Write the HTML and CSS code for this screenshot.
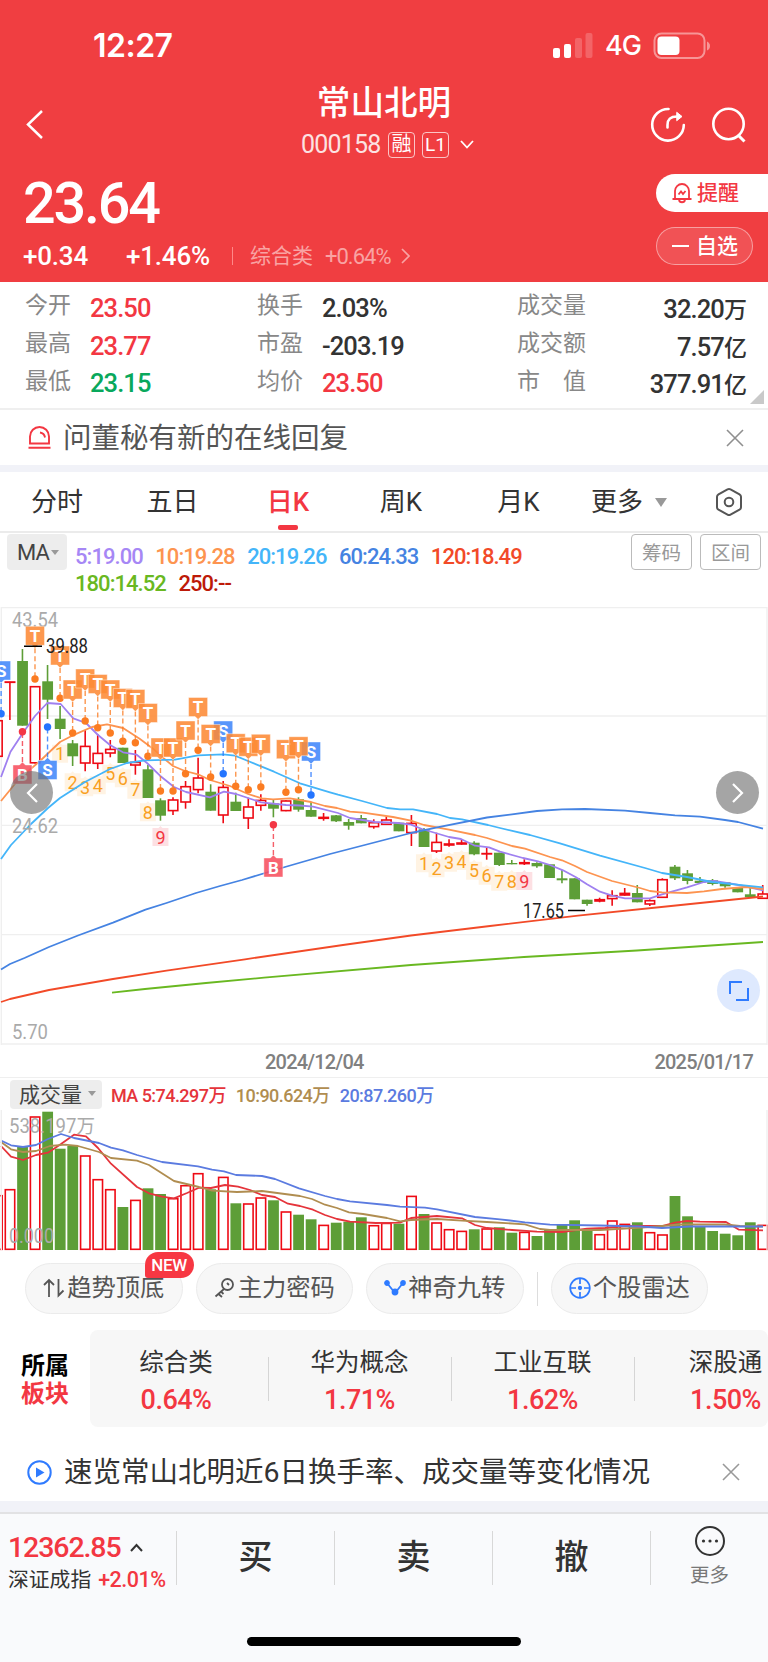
FILE: index.html
```html
<!DOCTYPE html>
<html lang="zh-CN">
<head>
    <meta charset="UTF-8">
    <meta name="viewport" content="width=device-width, initial-scale=1.0">
    <title>常山北明 000158</title>
    <link rel="stylesheet" href="styles.css">
</head>
<body>
    <header class="header">
        <div class="status-bar">
            <span class="clock">12:27</span>
            <svg class="signal" width="40" height="26" viewBox="0 0 40 26" fill="#fff">
                <rect x="0" y="15" width="7" height="10" rx="2"/>
                <rect x="11" y="11" width="7" height="14" rx="2"/>
                <rect x="22" y="5" width="7" height="20" rx="2" opacity=".2"/>
                <rect x="32.500" y="0" width="7" height="25" rx="2" opacity=".2"/>
            </svg>
            <span class="network">4G</span>
            <svg width="58" height="28" viewBox="0 0 58 28">
                <rect x="1.500" y="1.500" width="50" height="24.500" rx="7" fill="none" stroke="#fff" stroke-opacity=".45" stroke-width="2"/>
                <rect x="4.500" y="4.500" width="22" height="18.500" rx="4" fill="#fff"/>
                <path d="M54 9.500q3 1.500 3 4.500t-3 4.500z" fill="#fff" fill-opacity=".45"/>
            </svg>
        </div>

        <div class="nav">
            <svg class="back" width="20" height="30" viewBox="0 0 20 30" fill="none" stroke="#fff" stroke-width="2.500"><path d="M17 2 3 15.500 17 29"/></svg>
            <div class="stock">
                <h1>常山北明</h1>
                <div class="stock-code">
                    <span class="num">000158</span>
                    <span class="tag">融</span>
                    <span class="tag tag-level">L1</span>
                    <svg width="14" height="9" viewBox="0 0 14 9" fill="none" stroke="#fff" stroke-width="1.800"><path d="M1 1l6 6.500L13 1"/></svg>
                </div>
            </div>
            <div class="nav-actions">
                <svg width="36" height="36" viewBox="0 0 36 36" fill="none" stroke="#fff" stroke-width="2.600" stroke-linecap="round">
                    <path d="M18.500 2A15.800 15.800 0 1 0 33.800 18"/>
                    <path d="M17.500 20.500v-2.500c0-6 3-8.500 9.500-8.500"/>
                    <path d="M27 5.500l5 4-5 4z" fill="#fff" stroke-width="1" stroke-linejoin="round"/>
                </svg>
                <svg width="36" height="36" viewBox="0 0 36 36" fill="none" stroke="#fff" stroke-width="2.600">
                    <circle cx="17.500" cy="17" r="15.200"/>
                    <path d="M27 28l6.500 6.500" stroke-width="3"/>
                </svg>
            </div>
        </div>

        <div class="quote">
            <div class="quote-main">
                <div class="price num">23.64</div>
                <div class="change">
                    <span class="num diff">+0.34</span>
                    <span class="num percent">+1.46%</span>
                    <i class="bar"></i>
                    <span class="sector-name">综合类</span>
                    <span class="num sector-change">+0.64%</span>
                    <svg width="9" height="16" viewBox="0 0 9 16" fill="none" stroke="#f9a3a3" stroke-width="1.700"><path d="M1 1l7 7-7 7"/></svg>
                </div>
            </div>
            <div class="quote-actions">
                <div class="pill pill-alert">
                    <svg width="22" height="22" viewBox="0 0 22 22" fill="none" stroke="#f33742" stroke-width="1.800">
                        <path d="M4 17V9a7 7 0 0 1 14 0v8M1.500 17h19M8 18c.5 3 5.500 3 6 0M7.500 12.500l2.500-3 2 2.500 2.500-3"/>
                    </svg>
                    提醒
                </div>
                <div class="pill pill-fav"><i class="minus"></i>自选</div>
            </div>
        </div>
    </header>

    <section class="stats">
        <div class="stat"><label>今开</label><b class="num up">23.50</b></div>
        <div class="stat"><label>换手</label><b class="num">2.03%</b></div>
        <div class="stat stat-right"><label>成交量</label><b class="num">32.20<em>万</em></b></div>
        <div class="stat"><label>最高</label><b class="num up">23.77</b></div>
        <div class="stat"><label>市盈</label><b class="num">-203.19</b></div>
        <div class="stat stat-right"><label>成交额</label><b class="num">7.57<em>亿</em></b></div>
        <div class="stat"><label>最低</label><b class="num down">23.15</b></div>
        <div class="stat"><label>均价</label><b class="num up">23.50</b></div>
        <div class="stat stat-right"><label>市　值</label><b class="num">377.91<em>亿</em></b></div>
        <i class="corner"></i>
    </section>

    <div class="notice">
        <svg width="23" height="23" viewBox="0 0 23 23" fill="none" stroke="#f33742" stroke-width="1.900">
            <path d="M2 17.500V10.500a9.500 9.500 0 0 1 19 0v7zM.500 21.800h22M12 6.500c3 .5 4.500 2 5 5"/>
        </svg>
        <p>问董秘有新的在线回复</p>
        <svg class="close" width="18" height="18" viewBox="0 0 18 18" stroke="#8f8f8f" stroke-width="1.600"><path d="M1 1l16 16M17 1L1 17"/></svg>
    </div>

    <nav class="tabs">
        <span class="tab">分时</span>
        <span class="tab">五日</span>
        <span class="tab active">日K</span>
        <span class="tab">周K</span>
        <span class="tab">月K</span>
        <span class="tab tab-more">更多<i class="arrow"></i></span>
        <svg class="tab-set" width="28" height="30" viewBox="0 0 28 30" fill="none" stroke="#555" stroke-width="2">
            <path d="M12.500 2.300q1.500-.8 3 0l9 5q1.500.9 1.500 2.500v10.400q0 1.600-1.500 2.500l-9 5q-1.500.8-3 0l-9-5Q2 21.800 2 20.200V9.800q0-1.600 1.500-2.500z"/>
            <circle cx="14" cy="15" r="4.300"/>
        </svg>
    </nav>

    <section class="ma-bar">
        <span class="select select-ma">MA<i class="arrow arrow-small"></i></span>
        <div class="legend num">
            <span class="ma5">5:19.00</span>
            <span class="ma10">10:19.28</span>
            <span class="ma20">20:19.26</span>
            <span class="ma60">60:24.33</span>
            <span class="ma120">120:18.49</span>
            <span class="ma180">180:14.52</span>
            <span class="ma250">250:--</span>
        </div>
        <button>筹码</button>
        <button>区间</button>
    </section>

    <section class="kline">
        <svg id="kline" width="768" height="438" viewBox="0 607 768 438"></svg>
        <span class="round round-left"><svg width="12" height="20" viewBox="0 0 12 20"><path d="M11 1L2 10l9 9"/></svg></span>
        <span class="round round-right"><svg width="12" height="20" viewBox="0 0 12 20"><path d="M1 1l9 9-9 9"/></svg></span>
        <span class="full"><svg width="20" height="20" viewBox="0 0 20 20" fill="none" stroke="#2f7bff" stroke-width="2"><path d="M1 13V1h12M19 7v12H7"/></svg></span>
    </section>
    <div class="dates num"><span>2024/12/04</span><span>2025/01/17</span></div>

    <section class="volume">
        <div class="volume-bar">
            <span class="select select-vol">成交量<i class="arrow arrow-small"></i></span>
            <div class="legend-vol num">
                <span class="vol5">MA 5:74.297万</span>
                <span class="vol10">10:90.624万</span>
                <span class="vol20">20:87.260万</span>
            </div>
        </div>
        <svg id="volume" width="768" height="141" viewBox="0 1110 768 141"></svg>
    </section>

    <section class="chips">
        <div class="chip">
            <svg width="22" height="20" viewBox="0 0 22 20" fill="none" stroke="#555" stroke-width="1.800"><path d="M1 7l5-5 5 5M6 2v17M15.500 1v16.500l5-5"/></svg>
            趋势顶底
            <span class="new">NEW</span>
        </div>
        <div class="chip">
            <svg width="22" height="20" viewBox="0 0 22 20" fill="none" stroke="#555" stroke-width="1.800"><circle cx="13.500" cy="6.500" r="5.500"/><path d="M10 11l-8.500 7.500M4.500 16l3.500 3M7 13.500l2.500 2.500M13 5l2 2"/></svg>
            主力密码
        </div>
        <div class="chip">
            <svg width="22" height="20" viewBox="0 0 22 20" fill="#2f7bff" stroke="#2f7bff" stroke-width="1.800"><path d="M3 5l8 10 8-10" fill="none"/><circle cx="3" cy="5" r="2"/><circle cx="11" cy="14" r="2.500"/><circle cx="19" cy="5" r="2"/></svg>
            神奇九转
        </div>
        <i class="chip-line"></i>
        <div class="chip">
            <svg width="22" height="22" viewBox="0 0 22 22" fill="none" stroke="#2f7bff" stroke-width="1.700"><circle cx="11" cy="11" r="9.800"/><path d="M11 1v6M11 15v6M1 11h6M15 11h6"/><circle cx="11" cy="11" r="1.300" fill="#2f7bff"/></svg>
            个股雷达
        </div>
    </section>

    <section class="sectors">
        <div class="sectors-title">所属<br><span>板块</span></div>
        <div class="sectors-list">
            <div class="sector"><span>综合类</span><b class="num">0.64%</b></div>
            <div class="sector"><span>华为概念</span><b class="num">1.71%</b></div>
            <div class="sector"><span>工业互联</span><b class="num">1.62%</b></div>
            <div class="sector"><span>深股通</span><b class="num">1.50%</b></div>
        </div>
    </section>

    <div class="notice notice-video">
        <svg width="25" height="25" viewBox="0 0 25 25"><circle cx="12.500" cy="12.500" r="11.200" fill="none" stroke="#2f7bff" stroke-width="2"/><path d="M9 7.500l8.500 5-8.500 5z" fill="#2f7bff"/></svg>
        <p>速览常山北明近6日换手率、成交量等变化情况</p>
        <svg class="close" width="18" height="18" viewBox="0 0 18 18" stroke="#999" stroke-width="1.600"><path d="M1 1l16 16M17 1L1 17"/></svg>
    </div>

    <footer class="footer">
        <div class="trade">
            <div class="index">
                <div class="index-value num">12362.85<svg width="13" height="9" viewBox="0 0 13 9" fill="none" stroke="#333" stroke-width="2"><path d="M1 8l5.500-6L12 8"/></svg></div>
                <div class="index-name">深证成指<span class="num">+2.01%</span></div>
            </div>
            <div class="action">买</div>
            <div class="action">卖</div>
            <div class="action">撤</div>
            <div class="more">
                <svg width="32" height="32" viewBox="0 0 32 32"><circle cx="16" cy="16" r="14" fill="none" stroke="#333" stroke-width="2"/><g fill="#333"><circle cx="9.500" cy="16" r="1.600"/><circle cx="16" cy="16" r="1.600"/><circle cx="22.500" cy="16" r="1.600"/></g></svg>
                更多
            </div>
        </div>
        <i class="home"></i>
    </footer>
    <script src="chart.js"></script>
</body>
</html>
```

FILE: styles.css
```css
* {
    box-sizing: border-box;
}

body {
    margin: 0;
    width: 768px;
    background: #fff;
    color: #333;
    font-family: Roboto, "Noto Sans CJK SC", sans-serif;
    overflow-x: hidden;
}

svg {
    display: block;
    flex: none;
}

i,
em {
    font-style: normal;
}

.num {
    font-family: Roboto, "Noto Sans CJK SC", sans-serif;
    font-weight: 500;
    letter-spacing: -0.045em;
}

.up {
    color: #f33742;
}

.down {
    color: #09a85c;
}

/* header */
.header {
    height: 282px;
    background: #f03e41;
    color: #fff;
}

.status-bar {
    display: flex;
    align-items: center;
    height: 92px;
    padding: 0 57px 0 93px;
}

.clock {
    font: 600 32px/40px Inter, sans-serif;
    letter-spacing: -0.5px;
}

.signal {
    margin-left: auto;
    margin-right: 12px;
}

.network {
    width: 48px;
    font: 500 27px/40px Inter, sans-serif;
    letter-spacing: -1px;
}

.nav {
    display: grid;
    grid-template-columns: 1fr 200px 1fr;
    height: 76px;
    margin-top: -8px;
}

.back {
    margin: 25px 0 0 25px;
}

.stock {
    text-align: center;
}

.stock h1 {
    margin: 0;
    padding-top: 1px;
    font-size: 33.6px;
    font-weight: 500;
    line-height: 38px;
}

.stock-code {
    display: flex;
    align-items: center;
    height: 43px;
    padding-left: 17px;
    font-size: 25px;
}

.stock-code .num {
    width: 87px;
    text-align: left;
    font-weight: 400;
    letter-spacing: -0.8px;
    opacity: .85;
}

.tag {
    width: 27px;
    height: 26px;
    margin-right: 7px;
    border: 1.5px solid rgba(255, 255, 255, .7);
    border-radius: 4px;
    font-size: 20px;
    line-height: 22px;
}

.tag-level {
    margin-right: 11px;
    font-size: 19px;
    line-height: 24px;
}

.nav-actions {
    display: flex;
    justify-content: flex-end;
    gap: 25px;
    padding: 23px 21px 0 0;
}

.quote {
    display: flex;
    justify-content: space-between;
    height: 122px;
}

.quote-main {
    padding-left: 23px;
}

.price {
    height: 75px;
    padding-top: 9px;
    font-size: 57.5px;
    line-height: 70px;
    letter-spacing: -2.2px;
}

.change {
    display: flex;
    align-items: center;
    height: 42px;
    font-size: 26px;
}

.diff,
.percent {
    letter-spacing: -0.2px;
}

.diff {
    width: 103px;
}

.percent {
    width: 106px;
}

.bar {
    width: 1px;
    height: 18px;
    margin-right: 17px;
    background: #f88;
}

.sector-name {
    width: 75px;
    color: #f9a3a3;
    font-size: 21px;
    line-height: 26px;
}

.sector-change {
    margin-right: 10px;
    color: #f9a3a3;
    font-size: 22px;
    font-weight: 400;
}

.quote-actions {
    width: 112px;
    padding-top: 14px;
}

.pill {
    display: flex;
    align-items: center;
    height: 38px;
    padding-left: 15px;
    font-size: 21px;
    font-weight: 500;
    line-height: 28px;
}

.pill-alert {
    gap: 4px;
    border-radius: 19px 0 0 19px;
    background: #fff;
    color: #f33742;
}

.pill-fav {
    width: 97px;
    margin-top: 15px;
    padding-bottom: 1px;
    border: 1.5px solid rgba(255, 255, 255, .45);
    border-radius: 19px;
    background: #f15255;
}

.minus {
    width: 17px;
    height: 2px;
    margin-right: 7px;
    background: #fff;
}

/* quote table */
.stats {
    position: relative;
    display: grid;
    grid-template-columns: 232px 260px 1fr;
    grid-auto-rows: 37.7px;
    height: 126px;
    padding: 7px 22px 0 25px;
}

.stat {
    display: flex;
    align-items: center;
}

.stat label {
    width: 65px;
    color: #888;
    font-size: 23px;
    line-height: 34px;
    padding-bottom: 3px;
}

.stat-right label {
    width: 80px;
}

.stat b {
    font-size: 25.5px;
    letter-spacing: -0.9px;
}

.stat em {
    font-size: 23px;
}

.stat-right {
    justify-content: space-between;
}

.corner {
    position: absolute;
    right: 4px;
    bottom: 4px;
    border-left: 14px solid transparent;
    border-bottom: 14px solid #c9c9c9;
}

.notice {
    display: flex;
    align-items: center;
    height: 57px;
    padding: 0 24px 0 28px;
    border-top: 2px solid #efefef;
}

.notice p {
    margin: 2px auto 0 12px;
    color: #555;
    font-size: 28.5px;
    line-height: 40px;
}

/* period tabs */
.tabs {
    display: flex;
    height: 68px;
    padding: 8px 25px 0 31px;
    border-top: 7px solid #f1f2f8;
    border-bottom: 2px solid #ebebeb;
    color: #333;
    font-size: 26px;
    line-height: 44px;
}

.tab {
    position: relative;
    width: 115.500px;
}

.tab:nth-child(3) {
    width: 114px;
    padding-left: 5px;
}

.tab:nth-child(4) {
    padding-left: 4px;
}

.tab:nth-child(5) {
    width: 100px;
    padding-left: 6px;
}

.tab-more {
    display: flex;
    align-items: center;
    width: 124px;
    height: 44px;
}

.tab.active {
    color: #f33742;
    font-weight: 500;
}

.active::after {
    content: "";
    position: absolute;
    left: 16px;
    bottom: 1px;
    width: 20px;
    height: 5px;
    border-radius: 2px;
    background: #f33742;
}

.tab-set {
    margin-top: 7px;
}

.arrow {
    margin-left: 12px;
    border: 6.5px solid transparent;
    border-top: 9px solid #999;
    border-bottom: 0;
}

.arrow-small {
    margin-left: 2px;
    border-width: 5px 4.5px 0;
}

/* moving averages */
.ma-bar {
    display: flex;
    height: 74px;
    padding: 1px 7px 0;
}

.select {
    display: flex;
    align-items: center;
    border-radius: 4px;
    background: #ededed;
    color: #444;
}

.select-ma {
    width: 60px;
    height: 36px;
    padding-left: 10px;
    font-size: 22px;
    letter-spacing: -1px;
}

.legend {
    display: flex;
    flex-wrap: wrap;
    align-content: flex-start;
    width: 556px;
    padding: 9px 40px 0 8px;
    column-gap: 12.5px;
    font-size: 22px;
    line-height: 27px;
    letter-spacing: -0.95px;
}

.ma5 { color: #a687f5; }
.ma10 { color: #fd9450; }
.ma20 { color: #44b5f9; }
.ma60 { color: #4583e2; }
.ma120 { color: #f24a28; }
.ma180 { color: #69b821; }
.ma250 { color: #bd1a08; }

.ma-bar button {
    flex: none;
    width: 61px;
    height: 36px;
    margin-left: 8px;
    padding: 0;
    border: 1.5px solid #bbb;
    border-radius: 4px;
    background: #fff;
    color: #999;
    font: 19.5px/32px "Noto Sans CJK SC", sans-serif;
}

.kline {
    position: relative;
    height: 438px;
}

.kline text,
.volume text {
    font-family: Roboto, "Noto Sans CJK SC", sans-serif;
    font-size: 19.5px;
}

.kline .mark {
    font-size: 17px;
    font-weight: 700;
}

.kline .count {
    font-size: 18px;
}

/* page buttons lie over the chart */
.round,
.full {
    position: absolute;
    display: flex;
    align-items: center;
    justify-content: center;
    width: 43px;
    height: 43px;
    border-radius: 50%;
}

.round {
    top: 164px;
    background: rgba(110, 110, 110, .62);
}

.round path {
    fill: none;
    stroke: #fff;
    stroke-width: 2.2;
}

.round-left {
    left: 10px;
}

.round-right {
    right: 9px;
}

.full {
    top: 362px;
    right: 8px;
    background: #dee9fe;
}

.dates {
    display: flex;
    justify-content: space-between;
    height: 33px;
    padding: 0 15px 0 265px;
    border-bottom: 1.5px solid #efefef;
    color: #808080;
    font-size: 20px;
    line-height: 34px;
    letter-spacing: -0.8px;
}

/* volume */
.volume {
    height: 173px;
}

.volume-bar {
    display: flex;
    height: 32px;
    padding: 2px 10px 0;
}

.select-vol {
    width: 92px;
    height: 29px;
    padding: 0 0 3px 9px;
    font-size: 21px;
}

.select-vol .arrow {
    margin-left: 6px;
}

.legend-vol {
    display: flex;
    gap: 10px;
    padding-left: 9px;
    font-size: 18px;
    line-height: 32px;
    letter-spacing: -0.55px;
}

.vol5 { color: #e5343b; }
.vol10 { color: #b08d50; }
.vol20 { color: #5b7be0; }

.chips {
    display: flex;
    align-items: center;
    gap: 13px;
    height: 79px;
    padding: 0 25px 4px;
}

.chip {
    position: relative;
    display: flex;
    flex: none;
    align-items: center;
    justify-content: center;
    gap: 2px;
    width: 157.5px;
    height: 51px;
    padding-bottom: 2px;
    border: 1.5px solid #ebebeb;
    border-radius: 26px;
    background: #f7f7f7;
    color: #555;
    font-size: 24.3px;
    line-height: 34px;
    white-space: nowrap;
}

.chip-line {
    width: 1px;
    height: 34px;
    background: #ddd;
}

.new {
    position: absolute;
    top: -12px;
    right: -12px;
    width: 49px;
    height: 26px;
    border-radius: 13px 13px 13px 3px;
    background: #f73742;
    color: #fff;
    font-size: 17px;
    font-weight: 500;
    line-height: 27px;
    text-align: center;
    letter-spacing: -0.3px;
}

/* sectors */
.sectors {
    display: flex;
    height: 97px;
}

.sectors-title {
    width: 90px;
    padding: 22px 0 0 21px;
    color: #000;
    font-size: 24px;
    font-weight: 700;
    line-height: 28px;
}

.sectors-title span {
    color: #f33742;
}

.sectors-list {
    display: flex;
    width: 678px;
    overflow: hidden;
    border-radius: 8px;
    background: #f7f7f7;
}

.sector {
    flex: none;
    position: relative;
    display: flex;
    flex-direction: column;
    align-items: center;
    width: 183px;
    padding-top: 15px;
    color: #333;
    font-size: 24.5px;
    line-height: 36px;
}

.sector:first-child {
    width: 178px;
    padding-right: 6px;
}

.sector + .sector::before {
    content: "";
    position: absolute;
    left: 0;
    top: 27px;
    width: 1px;
    height: 44px;
    background: #d5d5d5;
}

.sector b {
    color: #f33742;
    font-size: 27px;
    line-height: 38px;
    letter-spacing: -0.5px;
}

.notice-video {
    height: 74px;
    padding: 16px 28px 0 27px;
    border: 0;
}

.notice-video p {
    color: #333;
}

/* trade bar */
.footer {
    height: 161px;
    border-top: 11px solid #f1f2f8;
    background: #f9fafc;
}

.trade {
    display: flex;
    height: 126px;
    padding-top: 17px;
    border-top: 2px solid #e2e2e4;
}

.index {
    width: 176px;
    padding-left: 8px;
}

.index-value {
    display: flex;
    align-items: center;
    gap: 9px;
    height: 33px;
    color: #f33742;
    font-size: 28.5px;
    letter-spacing: -1.1px;
}

.index-name {
    font-size: 20.8px;
    line-height: 31px;
    white-space: nowrap;
}

.index-name span {
    margin-left: 7px;
    color: #f33742;
    font-size: 21.5px;
    letter-spacing: -0.5px;
}

.action {
    width: 158px;
    height: 54px;
    border-left: 1px solid #d8d8d8;
    font-size: 34px;
    font-weight: 500;
    line-height: 53px;
    text-align: center;
}

.more {
    display: flex;
    flex: 1;
    flex-direction: column;
    align-items: center;
    height: 54px;
    border-left: 1px solid #d8d8d8;
    color: #777;
    font-size: 19.5px;
    line-height: 37px;
}

.more svg {
    margin-top: -6px;
}

.home {
    display: block;
    width: 274px;
    height: 9px;
    margin: -1px auto 0;
    border-radius: 5px;
    background: #000;
}
```

FILE: chart.js
```js
const RED = '#ee0a14';
const GREEN = '#5d9e37';
const x = i => 9.9 + 12.547 * i;

// [high, body top, body bottom, low, 1 = up / 0 = down], starting one bar left of the view
const candles = [
    [720, 720, 757, 757, 1], [681.7, 681.3, 682.3, 720, 1], [649, 661, 725.7, 725.7, 0], [686, 686, 763.5, 763.5, 1],
    [665, 681.3, 699.7, 719, 0], [706, 718.7, 729, 739, 0], [740, 743.3, 756.3, 766, 0], [730, 745.7, 763.7, 771.3, 1],
    [734, 752.7, 764, 769, 1], [740, 748.7, 753.7, 757.3, 1], [747.7, 747.7, 763, 763, 0], [750, 761.7, 765.7, 774.7, 1],
    [765, 769.3, 798, 798, 0], [798.3, 800.3, 815.7, 820.7, 0], [797.3, 799.3, 811.3, 815, 1], [781, 786, 802.7, 808.7, 1],
    [757.7, 777.3, 790.3, 793.3, 1], [784.3, 791.7, 810.7, 810.7, 0], [781, 786.7, 815.7, 823.3, 1], [792.7, 801.7, 811, 811, 0],
    [797.7, 806.3, 818.7, 829, 1], [794.3, 799.7, 806, 810.7, 1], [800, 803.3, 808.7, 817.3, 0], [800.3, 800.3, 811.3, 811.3, 1],
    [797.3, 799.3, 809.7, 811.7, 0], [801.7, 810, 816.7, 816.7, 0], [813, 816.7, 819, 820.7, 1], [815, 815.3, 821.3, 822, 0],
    [819, 822, 825.7, 829.7, 0], [815, 818, 823.3, 823.3, 0], [819.3, 822, 827.3, 828.7, 1], [816.7, 819.3, 825, 825, 1],
    [822.3, 822.7, 831.3, 831.3, 0], [815, 822.7, 833.3, 846, 1], [828, 829.3, 847, 847, 0], [832.7, 841.7, 851.7, 853, 1],
    [839.3, 843.3, 845.7, 846.7, 1], [840, 842.3, 844.7, 844.7, 1], [841.3, 842.7, 854.3, 855.3, 0], [847.7, 852.9, 854, 859.7, 1],
    [852.7, 852.7, 865, 866, 0], [860, 863, 864.3, 864.3, 0], [859.3, 862, 864.3, 865, 1], [862.3, 863, 866.3, 867.7, 0],
    [864.3, 864.3, 878, 878, 0], [870, 878.3, 880.3, 883.3, 0], [878.3, 878.3, 899.3, 899.3, 0], [899.7, 899.7, 904, 905.7, 0],
    [897.7, 899, 901.7, 902.3, 1], [890.3, 895, 899.3, 905.7, 1], [888, 892.7, 895.7, 895.7, 1], [885, 893, 902.3, 902.3, 0],
    [899.3, 900, 904.7, 906, 1], [878.3, 879, 898, 898, 1], [865, 866.7, 878.3, 880, 0], [870, 873.3, 881, 884.3, 0],
    [877, 880.7, 883, 883, 0], [879, 880.3, 884, 885.3, 0], [882.3, 882.3, 886.3, 887.7, 0], [887.7, 887.7, 892.3, 892.3, 0],
    [887.7, 894.3, 897.3, 897.3, 0], [885, 893.3, 899, 899, 1]
];

const volumes = [
    1195, 1189, 1147, 1116.3, 1111.7, 1148.7, 1146, 1155.3, 1179, 1189, 1207, 1199.7, 1188.3, 1194, 1198, 1185, 1173,
    1189.3, 1176.7, 1203.3, 1203.3, 1197.3, 1200.3, 1211.3, 1214.7, 1219.3, 1224.7, 1222.7, 1221.7, 1217.3, 1225,
    1222.7, 1223.7, 1195.7, 1214, 1222.3, 1229, 1230.7, 1229.3, 1228.3, 1227.3, 1232.7, 1231.7, 1236, 1229.3, 1225,
    1220.3, 1230, 1234, 1220.3, 1223.7, 1222.3, 1232, 1234.3, 1196, 1216.3, 1227, 1231, 1233.7, 1235.3, 1222.3, 1224.7
];
// bars of rising days, same numbering as the candles
const volumeUp = [-1, 0, 2, 6, 7, 8, 10, 13, 14, 15, 17, 19, 20, 22, 25, 29, 30, 32, 34, 35, 36, 38, 41, 47, 48, 49, 51, 52, 60];

const maLines = [
    ['#9f80f0', '1,777 10.5,751.7 22.7,733.3 35,716 47.3,703 60.7,704 73.3,718.3 86,723 98,735 110,745 123,752.3 136.7,754.7 147,763 160,775.7 174,787 186,792 210,797.3 224,791.7 236,794 261,802.3 286,805 300,805.5 313,806.7 338,813 350,818 375,822 398,823 411,824.7 422,829 449,837 461,839 475,845.7 489,847.3 500,851.7 523,858 538,861.3 550,865 563,870.3 576,877.3 587,884.3 600,891.7 612,895.7 625,898.3 650,898.3 662,894.3 687,887.3 704,882 714,881 733,884 746,886.5 763,890.3'],
    ['#fd9450', '1,801 19,779 40,761 60,742 75,734.3 92,727 107,724.3 123,728 140,739 153,748.7 163,757.7 173,766 185,771 198,774.3 210,780 230,786 248,794 262,798.3 273,799.3 290,798.3 311,802 325,806 337,808 350,811.7 363,812.7 393,817 411,820.7 424,825 449,829.7 475,835 487,838 512,846 525,848.7 550,857 562,860.3 575,866 587,872 612,881 640,888 650,891 662,892.3 687,893 704,891.3 722,889 746,887 763,889'],
    ['#44b5f9', '1,859 11,845 31,824 48,808 60,798 85,782 110,769 127,763 145,760.3 175,759.7 198,755.3 223,754.3 235,755.7 248,761 274,771.7 300,783.3 330,792.3 338,794.7 362,801 387,808 400,809.3 413,809.3 437,814 450,818 462,819.3 488,825 500,828 530,835 560,843.3 600,855.7 645,868 662,873 687,877 712,882 737,884.7 763,887.3'],
    ['#4583e2', '1,969.5 10,964 24.5,958 49,947 78,935.5 113,922.7 145.5,909.7 166.5,903 196,893 220,886 242,880 285,867 330,854 411,833 436,827.7 487,817.5 512,814.3 537,811 562,809.3 585,809 625,810.7 650,813 675,815.3 700,816.7 725,820 738,822 763,828.7'],
    ['#f24a28', '1,1002 10,999 49,990 113,979 166.5,970.7 245,959.3 343,945 411,935.5 490,926 578,915.7 671,906 763,896.5'],
    ['#69b821', '112,992.7 145,989 206,983 264,977.7 411,965 524,957 637,950.5 763,942']
];

const volLines = [
    ['#e5343b', '1,1146 11,1156.7 23,1160 36,1155 48,1152.7 61,1144 74,1134.7 86,1136.3 98,1148 111,1163.7 137,1187 149,1193.3 162,1196.7 174,1198.3 187,1193 199,1187.7 211,1188 225,1185 238,1186.7 250,1190 262,1195 275,1197 288,1203.7 300,1206 313,1209.7 325,1215 337,1219 350,1221.7 376,1223 400,1222.7 411,1218 437,1216 462,1218.3 475,1225 487,1228 512,1230 537,1231.7 562,1232 587,1228.7 605,1228 627,1226 662,1226 675,1222.7 687,1221 700,1221.7 726,1222 739,1229.7 763,1230.3'],
    ['#b08d50', '1,1142 11,1149.3 23,1152 36,1151 50,1146 65,1144.7 78,1146 99,1152 111,1158 137,1160.7 149,1165 174,1181 199,1187 212,1190.7 237,1192 262,1191 300,1196 312,1199 325,1204.7 337,1208 349,1212.3 363,1214 387,1218 400,1221.3 411,1220 437,1219 462,1220.7 487,1222 525,1224.3 540,1229 550,1230 600,1230 650,1227 680,1224.5 725,1224.5 740,1226 763,1226.5'],
    ['#5b7be0', '1,1140.5 11,1145.3 23,1147 36,1145 48,1139 61,1134 74,1138 99,1143 111,1147.7 123,1150.3 137,1155 162,1162 198,1166.3 212,1169.7 224,1171.3 236,1175 262,1176 275,1179 299,1188.3 325,1196 337,1199 350,1201.3 387,1205 400,1206.7 425,1207.7 437,1209.3 475,1217 500,1219.3 525,1222.3 550,1224.7 600,1225.5 640,1226.5 662,1228 690,1226.5 763,1226.5']
];

// [letter, bar, box top, dot y]
const marks = [
    ['S', -0.7, 661, 713.7], ['B', 1, 765, 731.7], ['T', 2, 626.3, 679], ['S', 3, 760.5, 727], ['T', 4, 646, 698.3],
    ['T', 5, 680, 733], ['T', 6, 669, 721], ['T', 7, 674.5, 727.7], ['T', 8, 680, 733], ['T', 9, 688.5, 741.3],
    ['T', 10, 689.5, 742.7], ['T', 11, 703.5, 756.3], ['T', 12, 738, 791], ['T', 13, 738, 791], ['T', 14, 721, 773.7],
    ['T', 15, 697.5, 750.3], ['S', 17, 721, 773.7], ['T', 16, 724.5, 777], ['T', 18, 733.7, 786.3], ['T', 19, 737.3, 789.7],
    ['T', 20, 734.3, 787], ['B', 21, 858, 824.7], ['S', 24, 742, 795], ['T', 22, 739.7, 792.3], ['T', 23, 736.7, 789.7]
];
const markColors = { T: ['#fd8a35', '#fb7c22'], S: ['#4187fb', '#2475ff'], B: ['#f7505f', '#f33745'] };

// [bar, center y] of the nine-turn counters
const counts = [
    [[4, 753.7], [5, 782.3], [6, 787.3], [7, 785.3], [8, 773.7], [9, 778.3], [10, 789.7], [11, 812.3], [12, 837]],
    [[33, 863.3], [34, 868.3], [35, 862.7], [36, 861], [37, 870.7], [38, 875.7], [39, 881.7], [40, 881], [41, 881]]
];

function lines(list) {
    return list.map(l => `<polyline points="${l[1]}" fill="none" stroke="${l[0]}" stroke-width="1.8" stroke-linejoin="round"/>`).join('');
}

function box(i, top, bottom, up) {
    const left = x(i) - 5.3;
    if (up) {
        return `<rect x="${left + .7}" y="${top + .7}" width="9.4" height="${Math.max(bottom - top - 1.4, .3)}" fill="#fff" stroke="${RED}" stroke-width="1.6"/>`;
    }
    return `<rect x="${left}" y="${top}" width="10.8" height="${bottom - top}" fill="${GREEN}"/>`;
}

function text(tx, ty, str, color, width) {
    return `<text x="${tx}" y="${ty}" fill="${color}" textLength="${width}" lengthAdjust="spacingAndGlyphs">${str}</text>`;
}

let k = '';
[607.7, 716, 825.3, 934.7, 1044].forEach(y => {
    k += `<path d="M1 ${y}H767" stroke="#efefef" stroke-width="1.3"/>`;
});
k += '<path d="M1.300 607V1045M767 607V1045" stroke="#efefef" stroke-width="1.3"/>';

counts.forEach(group => group.forEach(([i, y], n) => {
    const last = n === 8;
    k += `<path d="M${x(i) - 8} ${y - 9}h6l2-2 2 2h6v18h-16z" fill="${last ? '#fde0e3' : '#fff3e3'}"/>`;
    k += `<text class="count" x="${x(i)}" y="${y + 6.5}" text-anchor="middle" fill="${last ? '#f33742' : '#f9a01f'}">${n + 1}</text>`;
}));

candles.forEach(([high, top, bottom, low, up], n) => {
    const i = n - 1;
    k += `<path d="M${x(i)} ${high}V${low}" stroke="${up ? RED : GREEN}" stroke-width="1.6"/>`;
    k += box(i, top, bottom, up);
});
k += lines(maLines);
k += text(12, 627, '43.54', '#aaa', 46) + text(12, 833, '24.62', '#aaa', 46) + text(12, 1039, '5.70', '#aaa', 36);

marks.forEach(([letter, i, top, dot]) => {
    const [fill, solid] = markColors[letter];
    const cx = x(i);
    const below = top > dot;
    const from = below ? top - 3 : top + 22;
    k += `<path d="M${cx} ${from}V${dot}" stroke="${solid}" stroke-opacity=".8" stroke-width="1.4" stroke-dasharray="5 3"/>`;
    k += `<circle cx="${cx}" cy="${dot}" r="3.700" fill="${solid}"/>`;
    const nub = below
        ? `M${cx - 9.500} ${top}h6.500l3-3 3 3h6.500v19h-19z`
        : `M${cx - 9.500} ${top}h19v19h-6.500l-3 3-3-3h-6.500z`;
    k += `<path d="${nub}" fill="${fill}" fill-opacity=".88" stroke="#fff" stroke-opacity=".6" stroke-width=".7"/>`;
    k += `<text class="mark" x="${cx}" y="${top + 15.5}" text-anchor="middle" fill="#fff">${letter}</text>`;
});
k += '<path d="M24 646.300H42M568 910.500H585" stroke="#000" stroke-width="1.500"/>';
k += text(46, 653, '39.88', '#222', 42) + text(523, 917.5, '17.65', '#222', 41);
document.getElementById('kline').innerHTML = k;

let v = '';
volumes.forEach((top, n) => {
    v += box(n - 1, top, 1250, volumeUp.includes(n - 1));
});
v += lines(volLines);
v += text(9, 1133, '538.197万', '#aaa', 86) + text(9, 1243, '0.000', '#aaa', 45);
v += '<path d="M1.300 1110V1250M767 1110V1250" stroke="#efefef" stroke-width="1.300"/>';
document.getElementById('volume').innerHTML = v;
```
